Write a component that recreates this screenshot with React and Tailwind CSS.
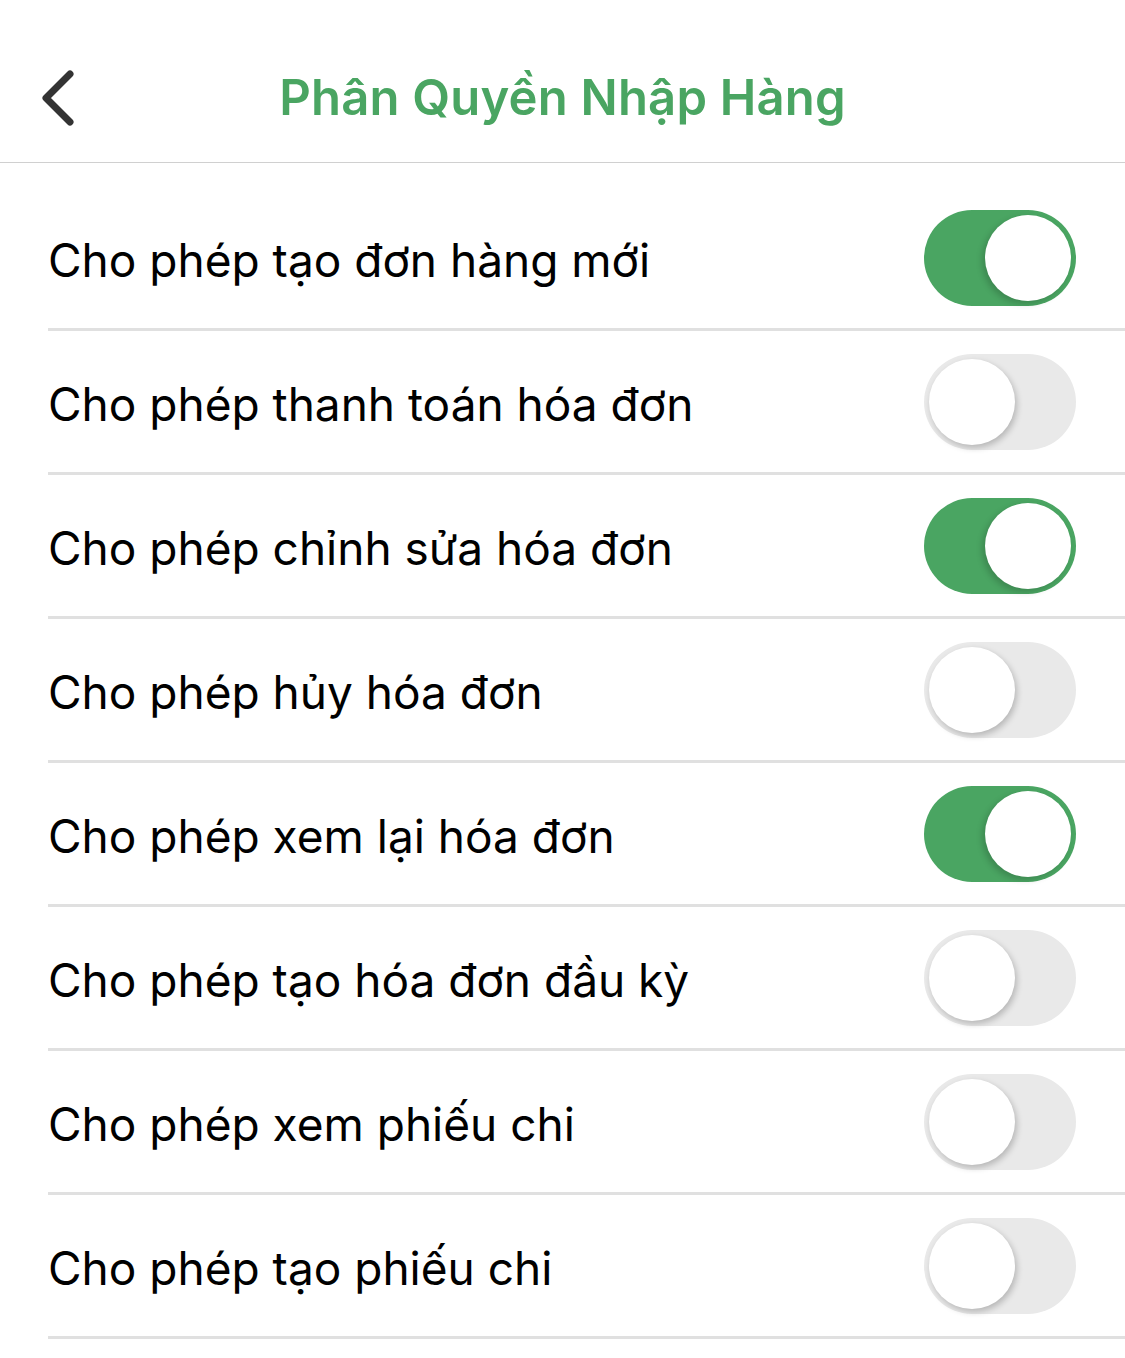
import React from "react";

const rows = [
  ["Cho phép tạo đơn hàng mới", true],
  ["Cho phép thanh toán hóa đơn", false],
  ["Cho phép chỉnh sửa hóa đơn", true],
  ["Cho phép hủy hóa đơn", false],
  ["Cho phép xem lại hóa đơn", true],
  ["Cho phép tạo hóa đơn đầu kỳ", false],
  ["Cho phép xem phiếu chi", false],
  ["Cho phép tạo phiếu chi", false],
];

function Toggle({ on }) {
  return on ? (
    <div className="w-[152px] h-[96px] rounded-full bg-[#4aa562] flex items-center justify-end pr-[5px] shrink-0">
      <div className="w-[86px] h-[86px] rounded-full bg-white shadow-[-3px_3px_6px_rgba(0,0,0,0.18)]" />
    </div>
  ) : (
    <div className="w-[152px] h-[96px] rounded-full bg-[#e9e9e9] flex items-center justify-start pl-[5px] shrink-0">
      <div className="w-[86px] h-[86px] rounded-full bg-white shadow-[2px_3px_6px_rgba(0,0,0,0.22)]" />
    </div>
  );
}

export default function App() {
  return (
    <div className="w-[1125px] h-[1358px] bg-white overflow-hidden" style={{ fontFamily: "Inter, 'Noto Sans', sans-serif" }}>
      <div className="h-[163px] border-b-[1.5px] border-[#d0d0d0] relative">
        <div className="absolute left-[38px] top-[68px]">
          <svg width="40" height="60" viewBox="0 0 40 60">
            <path d="M32 6 L8 30 L32 54" fill="none" stroke="#333" strokeWidth="7" strokeLinecap="round" strokeLinejoin="round" />
          </svg>
        </div>
        <div className="w-full text-center text-[49px] leading-[60px] font-semibold text-[#4aa562] tracking-[0.2px] pt-[68px]">
          Phân Quyền Nhập Hàng
        </div>
      </div>
      <div className="pt-[24px] pl-[48px]">
        {rows.map(([label, on], i) => (
          <div key={i} className="h-[144px] border-b-[3px] border-[#e0e0e0] flex items-center justify-between pr-[49px]">
            <span className="text-[46px] text-black pt-[6px]">{label}</span>
            <Toggle on={on} />
          </div>
        ))}
      </div>
    </div>
  );
}
